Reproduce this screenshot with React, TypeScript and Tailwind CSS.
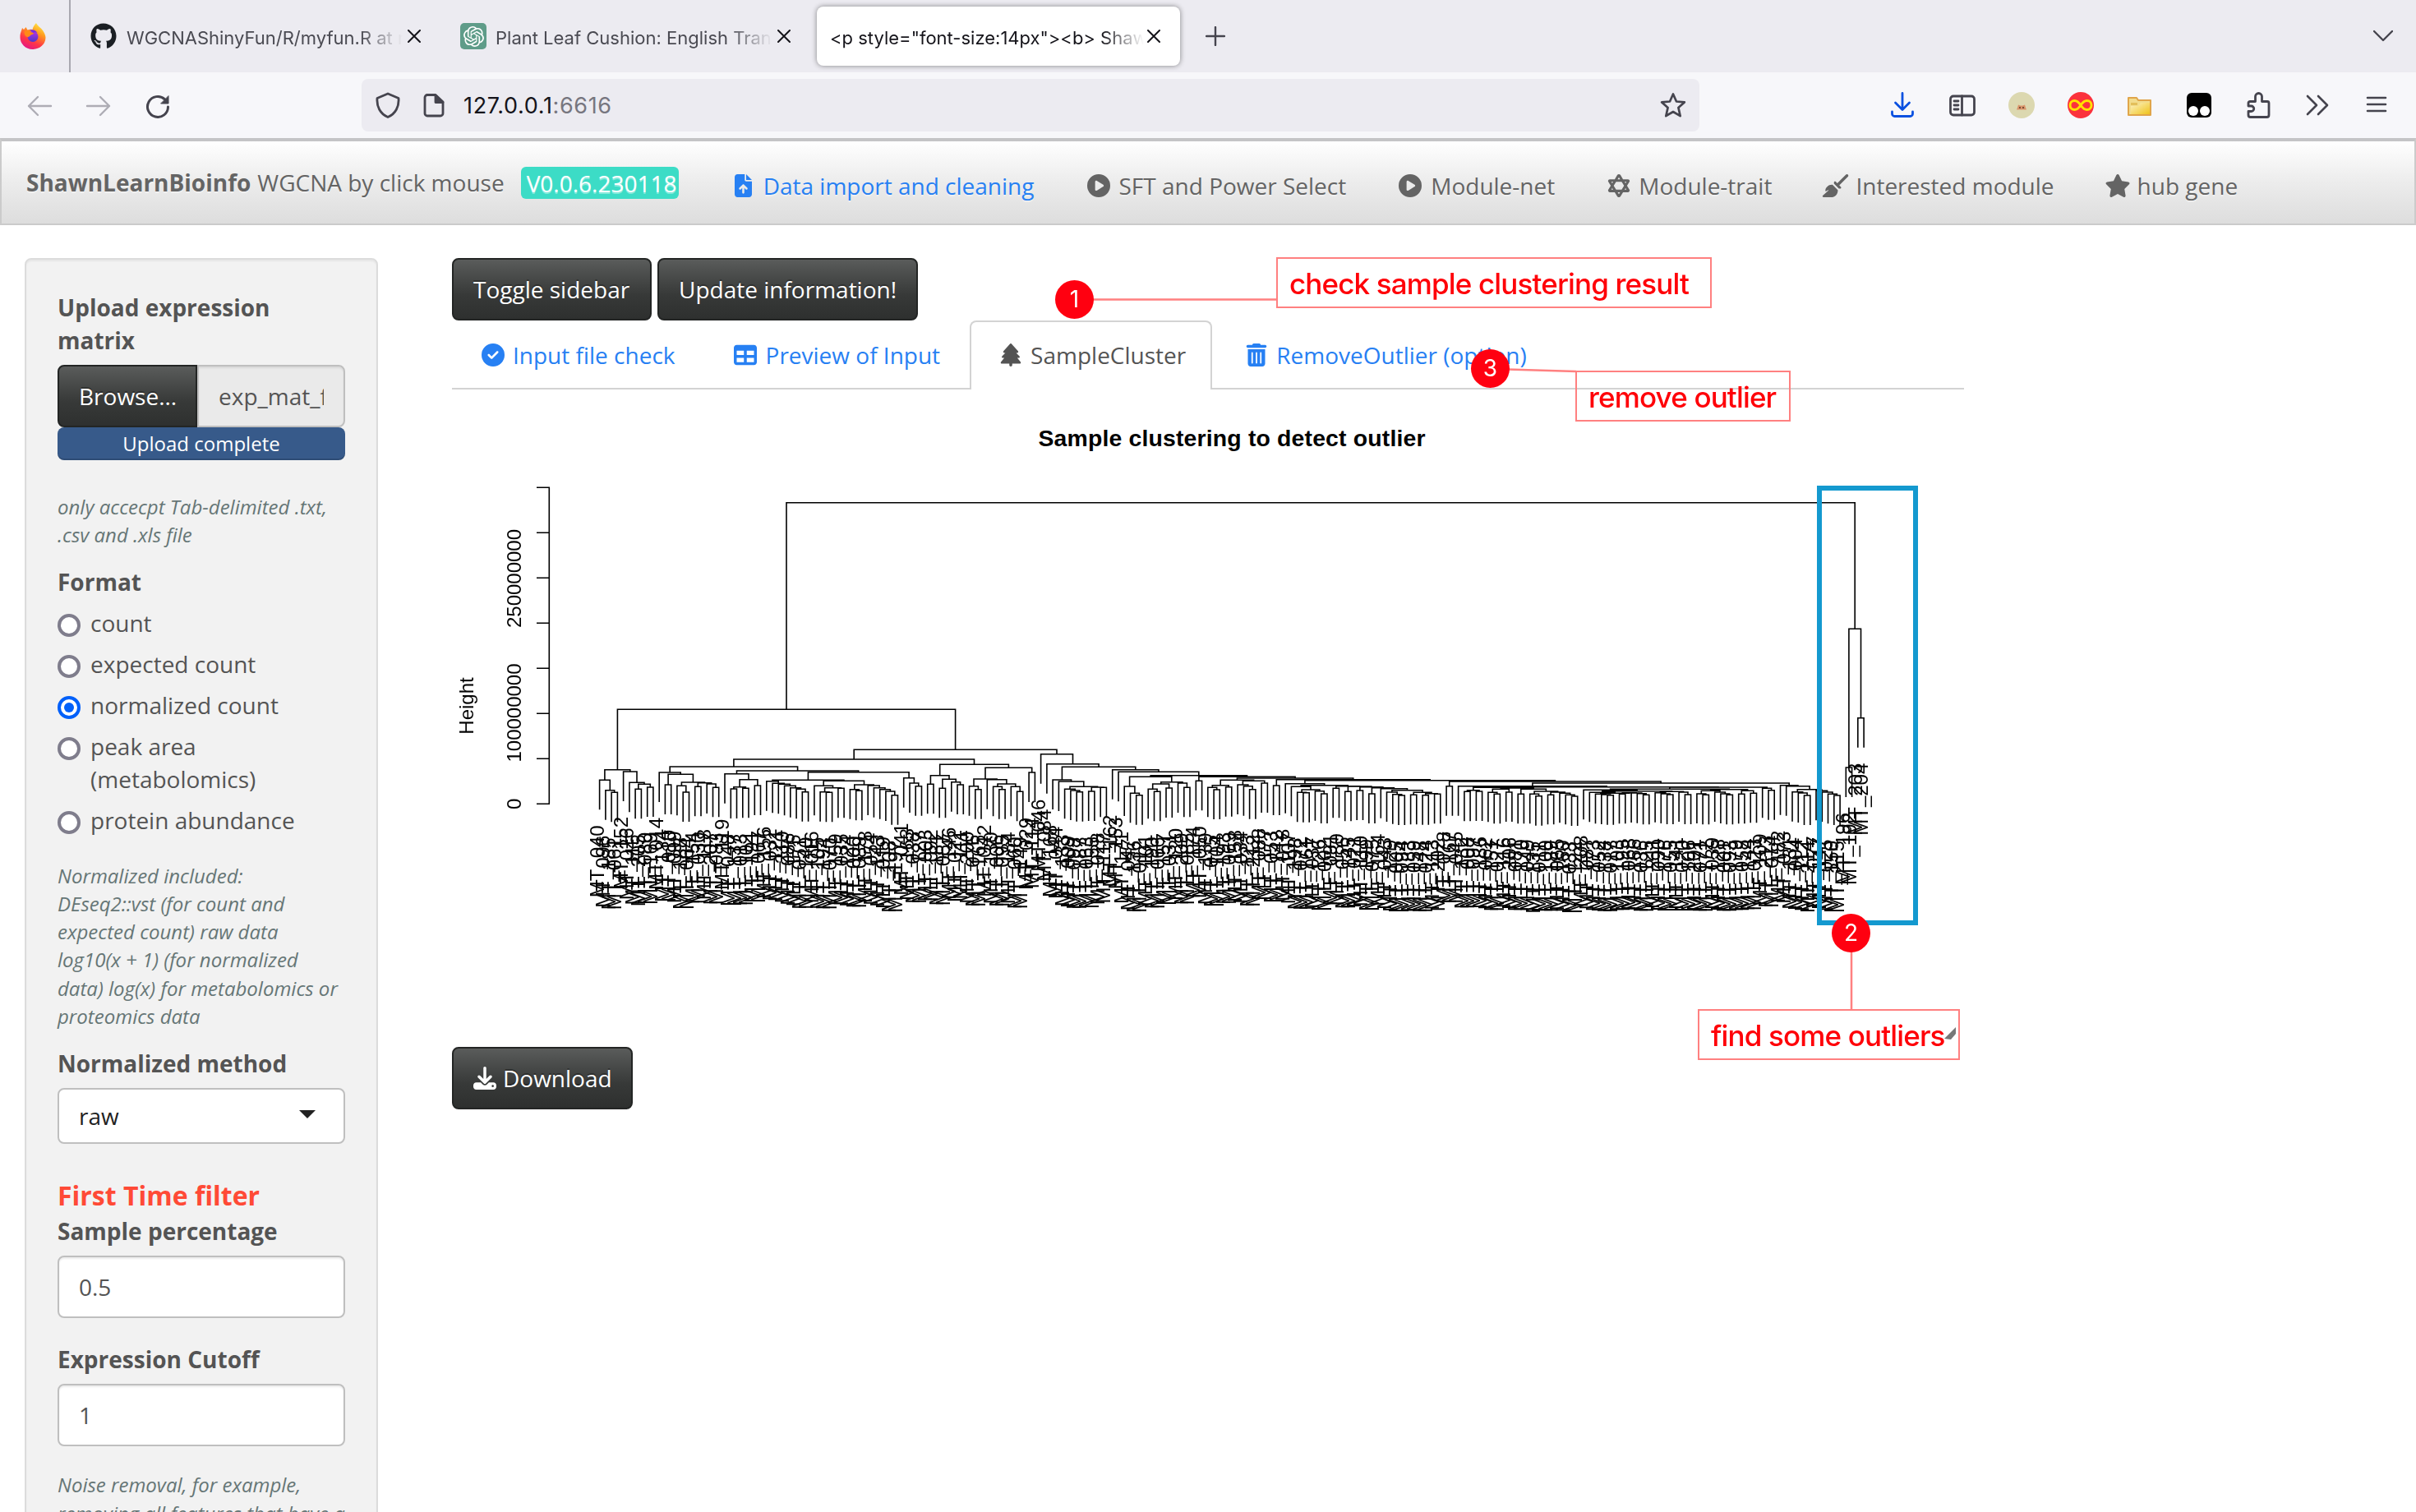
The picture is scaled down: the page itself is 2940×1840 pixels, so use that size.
import React from "react";
import {
  FaFileArrowUp,
  FaCirclePlay,
  FaStarOfDavid,
  FaBroom,
  FaStar,
  FaCircleCheck,
  FaTable,
  FaTree,
  FaTrashCan,
  FaDownload,
  FaGithub,
} from "react-icons/fa6";
import { SiOpenai } from "react-icons/si";

/* ---------- dendrogram data ---------- */

// A leaf is 0; a merge is [height, left, right].
type Node = 0 | [number, Node, Node];

const p = (h: number): Node => [h, 0, 0];

const groupA: Node = [290,
  [328, 0, [365, 0, p(373)]],
  [297, 0, [337, 0, [343, p(361), p(354)]]]];

const groupB: Node = [279,
  [300, 0, [307, p(345), [336, [349, 0, p(372)], [338, p(352), [342, 0, p(355)]]]]],
  [294,
    [305, 0, [326, [353, p(360), p(358)], p(348)]],
    [299,
      [328,
        [332, 0, [340, 0, [343, 0, [349, 0, [356, 0, [361, 0, p(371)]]]]]],
        [331,
          [349, 0, [356, [371, 0, p(373)], p(358)]],
          [345, [362, 0, p(367)], [348, 0, [356, 0, [362, 0, [369, 0, p(383)]]]]]]],
      [320, 0, [339, 0, p(350)]]]]];

const groupC: Node = [271,
  [311, p(343), [325, p(358), [335, 0, p(345)]]],
  [283,
    [324, [350, 0, p(362)], [326, 0, [342, [352, 0, p(362)], [352, 0, p(370)]]]],
    p(300)]];

const groupD: Node = [327, 0, [333, 0, [352,
  [361, 0, [366, 0, p(371)]],
  [354, p(369), p(355)]]]];

const groupE: Node = [316,
  [351, 0, [376, 0, p(383)]],
  [335, [342, [361, 0, p(370)], p(357)], [339, 0, p(355)]]];

const groupF: Node = [328,
  [347, [355, 0, p(363)], p(353)],
  [331, [345, 0, [350, 0, p(362)]], p(339)]];

const groupG: Node = [341, 0, [347,
  [352, 0, [363, [373, 0, p(374)], [368, 0, p(378)]]],
  [350, p(358), [351, p(370), [353, p(366), [356, p(378),
    [359, 0, [365, [372, 0, [380, 0, p(384)]], [373, p(382), [377, p(383), p(379)]]]]]]]]]];

const groupH: Node = [355,
  [365, p(370), p(369)],
  [357,
    [361, [373, 0, p(379)], p(372)],
    [361, p(379), [369, [379, 0, p(386)], [372, p(382), [376, 0, [382, 0, p(387)]]]]]]];

const groupI: Node = [361,
  [364, 0, [368,
    [373, 0, [376,
      [379, 0, [381, 0, p(383)]],
      [374, p(379), [375, 0, [377, 0, p(382)]]]]],
    [370, [374, 0, [378, 0, p(381)]], [372, 0, p(381)]]]],
  [362,
    [367, [378, 0, p(382)], [372, 0, [378, 0, p(382)]]],
    [367, p(379), p(376)]]];

const groupJ: Node = [347, 0, [350, 0, [362,
  [371, 0, [375, 0, p(384)]],
  [367, 0, [372, 0, [379, 0, p(384)]]]]]];

const lower: Node = [333,
  p(350),
  [339,
    [350, 0, [353, groupH, [354, groupI, [358, 0, p(365)]]]],
    groupJ]];

const middle: Node = [290, 0, [298, 0, [311,
  groupE,
  [316, p(331), [321, groupF, [326, p(348), [329, groupG, lower]]]]]]];

const tree: Node = [-685,
  [70, groupA, [217, [252, groupB, groupC], [233, 0, [269, 0, [280, groupD, middle]]]]],
  [-224, p(282), p(101)]];

const STEP = 7.257;
const X0 = 729.6;
const HANG = 36;
const toY = (h: number) => 840 + h / 3;

const leaves: { x: number; y: number }[] = [];
const segments: string[] = [];

function place(node: Node, parentY: number): { x: number; y: number } {
  if (node === 0) {
    const leaf = { x: X0 + leaves.length * STEP, y: parentY + HANG };
    leaves.push(leaf);
    return leaf;
  }
  const y = toY(node[0]);
  const l = place(node[1], y);
  const r = place(node[2], y);
  segments.push(`M${l.x.toFixed(1)} ${l.y.toFixed(1)}V${y.toFixed(1)}H${r.x.toFixed(1)}V${r.y.toFixed(1)}`);
  return { x: (l.x + r.x) / 2, y };
}
place(tree, 0);

const named: Record<number, string> = {
  0: "040", 4: "152", 10: "014", 21: "119", 51: "041", 72: "029", 74: "046", 75: "084",
  86: "162", 87: "153", 209: "196", 210: "192", 211: "203", 212: "204",
};
const taken = new Set(Object.values(named));
const labels = leaves.map((_, i) => {
  if (named[i]) return "MT_" + named[i];
  let n = (i * 89 + 7) % 213;
  let s = String(n).padStart(3, "0");
  while (taken.has(s)) {
    n = (n + 1) % 222;
    s = String(n).padStart(3, "0");
  }
  taken.add(s);
  return "MT_" + s;
});

const ticks = [593.3, 648.3, 703.3, 758.3, 813.3, 868.3, 923.3, 978.3];

function ClusterPlot() {
  return (
    <svg
      className="block h-[790px] w-[1840px]"
      viewBox="550 474 1840 790"
      fontFamily='"Liberation Sans", Arial, sans-serif'
      fontSize="24"
      fill="#000"
    >
      <text x="1499" y="542.5" textAnchor="middle" fontWeight="700" fontSize="28.4" textLength="471">
        Sample clustering to detect outlier
      </text>
      <g stroke="#000" strokeWidth="1.6" fill="none">
        <path d={"M668.3 593.3V978.3" + ticks.map((t) => `M669 ${t}H653`).join("")} />
        <path d={segments.join("")} />
      </g>
      <g opacity="0.99">
        <g textAnchor="middle">
          <text transform="translate(576 859) rotate(-90)">Height</text>
          <text transform="translate(633.5 978.3) rotate(-90)">0</text>
          <text transform="translate(633.5 867.5) rotate(-90)">100000000</text>
          <text transform="translate(633.5 704) rotate(-90)">250000000</text>
        </g>
        <g textAnchor="end">
          {leaves.map((l, i) => (
            <text key={i} transform={`translate(${(l.x + 5).toFixed(1)} ${(l.y + 19).toFixed(1)}) rotate(-90)`}>
              {labels[i]}
            </text>
          ))}
        </g>
      </g>
    </svg>
  );
}

/* ---------- browser chrome ---------- */

function Close() {
  return (
    <svg className="size-4 shrink-0" viewBox="0 0 16 16" stroke="#15141a" strokeWidth="2" strokeLinecap="round">
      <path d="M1 1l14 14M15 1L1 15" />
    </svg>
  );
}

function FadeText({ children, className }: { children: React.ReactNode; className: string }) {
  return (
    <span
      className={
        "mt-[3px] overflow-hidden whitespace-nowrap text-[22px] leading-8 [mask-image:linear-gradient(to_right,#000_calc(100%_-_52px),transparent)] " +
        className
      }
    >
      {children}
    </span>
  );
}

function Firefox() {
  return (
    <svg className="size-8" viewBox="0 0 32 32">
      <defs>
        <linearGradient id="fx" x1="0.8" y1="0" x2="0.3" y2="1">
          <stop offset="0" stopColor="#fff04a" />
          <stop offset="0.35" stopColor="#ff9a1f" />
          <stop offset="0.7" stopColor="#ff3647" />
          <stop offset="1" stopColor="#e31587" />
        </linearGradient>
        <linearGradient id="fxg" x1="0.5" y1="0" x2="0.5" y2="1">
          <stop offset="0" stopColor="#b833e1" />
          <stop offset="1" stopColor="#4a37c9" />
        </linearGradient>
      </defs>
      <path
        d="M20 0c1 3 5 5 8 9 2 3 3.500 6 3.500 9A15.500 14.500 0 0 1 .5 17c0-5 1.500-7 2.500-11l2 2 2.500-3 2 3.500c2-.8 4-.8 6-.5C16 5 18 2 20 0z"
        fill="url(#fx)"
      />
      <circle cx="16" cy="16.500" r="6.500" fill="url(#fxg)" />
      <path d="M6 10c3-1.500 6-.5 8 1.500 1.500 0 3 .5 3 1.200-1 1.500-3 1.300-4 2.300-1 1-2 3-5 1.500C6 15 5 12 6 10z" fill="#ff8a16" />
      <path d="M12 8.500c4-1 8 0 9.500 3.500-2-1-4-1-5 0z" fill="#7a2be0" />
    </svg>
  );
}

function TabStrip() {
  return (
    <div className="flex h-[88px] items-center bg-[#ecebf1] font-[Inter,sans-serif]">
      <div className="flex h-full w-[86px] items-center border-r-2 border-[#a9a8b0] pl-6">
        <Firefox />
      </div>
      <div className="flex w-[450px] items-center pl-6 text-[#4a4a52]">
        <FaGithub className="mr-3 size-8 shrink-0 text-[#1b1f24]" />
        <FadeText className="w-[336px]">WGCNAShinyFun/R/myfun.R at master</FadeText>
        <span className="ml-[6px]"><Close /></span>
      </div>
      <div className="flex w-[458px] items-center pl-6 text-[#4a4a52]">
        <span className="mr-[11px] flex size-8 shrink-0 items-center justify-center rounded-[5px] bg-[#5f9c89]">
          <SiOpenai className="size-[25px] text-white" />
        </span>
        <FadeText className="w-[337px]">Plant Leaf Cushion: English Translation</FadeText>
        <span className="ml-[6px]"><Close /></span>
      </div>
      <div className="flex h-[72px] w-[442px] items-center rounded-lg bg-white pl-4 text-[#15141a] shadow-[0_0_6px_rgba(0,0,0,0.45)]">
        <FadeText className="w-[382px]">{'<p style="font-size:14px"><b> ShawnLearn'}</FadeText>
        <span className="ml-[4px]"><Close /></span>
      </div>
      <svg className="ml-[31px] size-6" viewBox="0 0 24 24" stroke="#45444e" strokeWidth="2.400" strokeLinecap="round">
        <path d="M12 1v22M1 12h22" />
      </svg>
      <svg className="mr-[28px] ml-auto size-6" viewBox="0 0 24 24" fill="none" stroke="#45444e" strokeWidth="2.400" strokeLinecap="round" strokeLinejoin="round">
        <path d="M1 6l11 11L23 6" />
      </svg>
    </div>
  );
}

const line = { fill: "none", strokeLinecap: "round", strokeLinejoin: "round" } as const;

function AddressBar() {
  return (
    <div className="flex h-20 items-center bg-[#f7f7fa] pl-8 font-[Inter,sans-serif]">
      <svg className="size-8" viewBox="0 0 32 32" stroke="#aeadb5" strokeWidth="2.400" {...line}>
        <path d="M30 17H3M14 6L3 17l11 11" />
      </svg>
      <svg className="ml-10 size-8" viewBox="0 0 32 32" stroke="#aeadb5" strokeWidth="2.400" {...line}>
        <path d="M2 17h27M18 6l11 11-11 11" />
      </svg>
      <svg className="ml-10 size-8" viewBox="0 0 32 32" stroke="#45444e" strokeWidth="3" {...line}>
        <path d="M28.500 18a12.500 12.500 0 1 1-4-9.200" />
        <path d="M29 5v9h-9z" fill="#45444e" strokeWidth="1" />
      </svg>
      <div className="ml-[232px] flex h-16 w-[1628px] items-center rounded-lg bg-[#ecebf1] pr-4 pl-4">
        <svg className="size-8" viewBox="0 0 32 32" stroke="#45444e" strokeWidth="2.800" {...line}>
          <path d="M16 2l13 5.500c.8 10-3.500 19-13 23C6.500 26.500 2.200 17.500 3 7.500z" />
        </svg>
        <svg className="ml-6 size-8" viewBox="0 0 32 32" stroke="#45444e" strokeWidth="2.800" {...line}>
          <path d="M8 3.500h10l9 8.500v14a3 3 0 0 1-3 3H8a3 3 0 0 1-3-3v-19.500a3 3 0 0 1 3-3z" />
          <path d="M18 4v8.500h9z" fill="#45444e" />
        </svg>
        <span className="mt-[2px] ml-[20px] text-[27px] leading-9 tracking-[0.65px] text-[#15141a]">
          127.0.0.1<span className="text-[#77767f]">:6616</span>
        </span>
        <svg className="ml-auto size-8" viewBox="0 0 32 32" stroke="#45444e" strokeWidth="2.700" {...line}>
          <path d="M16 2.500l4 9 9.800.9-7.400 6.500 2.300 10.300L16 24l-8.700 5.200 2.300-10.300L2.200 12.400l9.800-.9z" />
        </svg>
      </div>
      <div className="ml-auto flex items-center gap-10 pr-8">
        <svg className="size-8" viewBox="0 0 32 32" stroke="#0a50e0" strokeWidth="2.800" {...line}>
          <path d="M15 1.500v20M6.500 13l8.500 8.500 8.500-8.500M2.500 24v2.500a3 3 0 0 0 3 3h19a3 3 0 0 0 3-3V24" />
        </svg>
        <svg className="size-8" viewBox="0 0 32 32" stroke="#45444e" strokeWidth="2.800" {...line}>
          <rect x="1.500" y="5" width="29" height="23" rx="3.500" />
          <path d="M15.500 5v23M6 11h5M6 16h5M6 21h5" />
        </svg>
        <svg className="size-8" viewBox="0 0 32 32">
          <circle cx="16" cy="16" r="16" fill="#dcd8b0" />
          <path d="M10 21.500l1-2.500 1-3.500 2.500 1h3l2.500-1 1 3.500 1 2.500z" fill="#d9936a" />
          <circle cx="14" cy="19" r="1" fill="#5b3a2a" />
          <circle cx="18" cy="19" r="1" fill="#5b3a2a" />
        </svg>
        <svg className="size-8" viewBox="0 0 32 32">
          <circle cx="16" cy="16" r="16" fill="#fb323c" />
          <path
            d="M16 16c-3-4.500-5-5.500-7.500-5.500a5.500 5.500 0 0 0 0 11c2.500 0 4.500-1 7.500-5.500s5-5.500 7.500-5.500a5.500 5.500 0 0 1 0 11c-2.500 0-4.500-1-7.500-5.500z"
            fill="none" stroke="#ffe100" strokeWidth="3"
          />
        </svg>
        <svg className="size-8" viewBox="0 0 32 32">
          <defs>
            <linearGradient id="fold" x1="0" y1="0" x2="1" y2="1">
              <stop offset="0" stopColor="#fdf3c4" />
              <stop offset="1" stopColor="#efc31b" />
            </linearGradient>
          </defs>
          <path d="M2 7h10l2 3h15v18H2z" fill="#f2dc8c" stroke="#e0a54a" strokeWidth="2" strokeLinejoin="round" />
          <path d="M5 17h9l3-4h11v14H5z" fill="url(#fold)" />
          <path d="M5 13h8v3H5z" fill="#e3bf5b" />
        </svg>
        <svg className="size-8" viewBox="0 0 32 32">
          <rect x="1" y="1" width="30" height="30" rx="6" fill="#000" />
          <circle cx="9" cy="23" r="6" fill="#fff" />
          <circle cx="23" cy="23" r="6" fill="#fff" />
        </svg>
        <svg className="size-8" viewBox="0 0 32 32" stroke="#45444e" strokeWidth="2.800" {...line}>
          <path d="M4 13.500a2 2 0 0 1 2-2h6.500V5.500a4 4 0 0 1 8 0v6H27a2 2 0 0 1 2 2V28a2.500 2.500 0 0 1-2.500 2.500h-20A2.500 2.500 0 0 1 4 28v-4.500h3.500a3 3 0 0 0 0-6.500H4z" />
        </svg>
        <svg className="size-8" viewBox="0 0 32 32" stroke="#45444e" strokeWidth="2.600" {...line}>
          <path d="M4 5l11 11L4 27M17 5l11 11-11 11" />
        </svg>
        <svg className="size-8" viewBox="0 0 32 32" stroke="#45444e" strokeWidth="2.600" {...line}>
          <path d="M5 7h22M5 15h22M5 23h22" />
        </svg>
      </div>
    </div>
  );
}

/* ---------- app ---------- */

const navItems = [
  { icon: FaCirclePlay, text: "SFT and Power Select", box: "w-[28px] mr-[11px] ml-[64px]" },
  { icon: FaCirclePlay, text: "Module-net", box: "w-[28px] mr-[11px] ml-[64px]" },
  { icon: FaStarOfDavid, text: "Module-trait", box: "w-[28px] mr-[10px] ml-[64px]" },
  { icon: FaBroom, text: "Interested module", box: "w-[35px] mr-[7px] ml-[60px]" },
  { icon: FaStar, text: "hub gene", box: "w-[32px] mr-[8px] ml-[61px]" },
];

function Navbar() {
  return (
    <div className="flex h-[106px] items-start border-2 border-t-4 border-[#cbcbcb] border-t-[#c4c4c6] bg-linear-to-b from-white via-[#ececec] to-[#dddddd] pl-[30px] text-[28px] leading-[40px] whitespace-nowrap text-[#646464] [text-shadow:0_2px_0_rgba(255,255,255,0.4)]">
      <div className="mt-[30px] flex items-center">
        <b>ShawnLearnBioinfo</b>
        <span className="ml-2">WGCNA by click mouse</span>
        <span className="ml-[20px] h-[39px] w-[192px] rounded-md bg-[#3cdcc6] pl-[7px] leading-[40px] text-white">
          V0.0.6.230118
        </span>
      </div>
      <div className="mt-[34px] ml-[68px] flex items-center">
        <FaFileArrowUp className="mr-[14px] h-[28px] w-[21px] text-[#2780f3]" />
        <span className="text-[#2780f3]">Data import and cleaning</span>
        {navItems.map(({ icon: Icon, text, box }) => (
          <React.Fragment key={text}>
            <Icon className={"h-[28px] " + box} />
            <span>{text}</span>
          </React.Fragment>
        ))}
      </div>
    </div>
  );
}

const darkButton =
  "flex items-center rounded-lg border-2 border-[#232524] bg-linear-to-b from-[#5a5c5b] via-[#373938] via-60% to-[#2e302f] h-[76px] px-6 text-white [text-shadow:0_-2px_0_rgba(0,0,0,0.3)] whitespace-nowrap";

function Radio({ text, checked }: { text: React.ReactNode; checked?: boolean }) {
  return (
    <div className="mt-[10px] flex items-start">
      <span
        className={
          "mt-[9px] mr-3 flex size-7 shrink-0 items-center justify-center rounded-full border-4 bg-white " +
          (checked ? "border-[#0060fa]" : "border-[#7f7d8c]")
        }
      >
        {checked && <span className="size-3 rounded-full bg-[#0060fa]" />}
      </span>
      <span>{text}</span>
    </div>
  );
}

const help = "text-[24px] leading-[34.28px] italic text-[#667676] whitespace-nowrap";
const field =
  "mt-[10px] flex h-[76px] items-center rounded-lg border-2 border-[#bfbfbf] bg-white pl-6 shadow-[inset_0_2px_2px_rgba(0,0,0,0.075)]";

function Sidebar() {
  return (
    <div className="ml-[30px] h-[1700px] w-[430px] shrink-0 rounded-lg border-2 border-[#dcdcdc] bg-[#f2f2f2] p-[38px] text-[28px] leading-[40px] text-[#545454] shadow-[inset_0_2px_2px_rgba(0,0,0,0.05)]">
      <b className="block">Upload expression<br />matrix</b>
      <div className="mt-[10px] flex">
        <div className={darkButton + " w-[170px] shrink-0 rounded-r-none"}>Browse...</div>
        <div className="flex h-[76px] w-[180px] items-center rounded-r-lg border-2 border-[#bfbfbf] bg-[#eaeaea] px-6 shadow-[inset_0_2px_2px_rgba(0,0,0,0.075)]">
          <span className="overflow-hidden whitespace-nowrap">exp_mat_fpkm.txt</span>
        </div>
      </div>
      <div className="h-10 rounded-lg bg-[#375a8a] text-center text-[24px] leading-[40px] text-white shadow-[inset_0_-2px_0_rgba(0,0,0,0.15)]">
        Upload complete
      </div>
      <p className={help + " mt-10"}>only accecpt Tab-delimited .txt,<br />.csv and .xls file</p>
      <b className="mt-[19px] block">Format</b>
      <Radio text="count" />
      <Radio text="expected count" />
      <Radio text="normalized count" checked />
      <Radio text={<>peak area<br />(metabolomics)</>} />
      <Radio text="protein abundance" />
      <p className={help + " mt-[31px]"}>
        Normalized included:<br />DEseq2::vst (for count and<br />expected count) raw data<br />
        log10(x + 1) (for normalized<br />data) log(x) for metabolomics or<br />proteomics data
      </p>
      <b className="mt-[20px] block">Normalized method</b>
      <div className="mt-[10px] flex h-[68px] items-center justify-between rounded-lg border-2 border-[#bfbfbf] bg-white pr-[34px] pl-6 text-[#222]">
        <span>raw</span>
        <span className="mb-1 border-x-10 border-t-10 border-x-transparent border-t-[#222]" />
      </div>
      <b className="mt-[45px] block text-[32px] leading-[36px] text-[#ff4a36]">First Time filter</b>
      <b className="mt-[5px] block">Sample percentage</b>
      <div className={field}>0.5</div>
      <b className="mt-[30px] block">Expression Cutoff</b>
      <div className={field}>1</div>
      <p className={help + " mt-[30px]"}>Noise removal, for example,<br />removing all features that have a</p>
    </div>
  );
}

const tabs = [
  { icon: FaCircleCheck, text: "Input file check" },
  { icon: FaTable, text: "Preview of Input" },
  { icon: FaTree, text: "SampleCluster", active: true },
  { icon: FaTrashCan, text: "RemoveOutlier (option)" },
];

function Main() {
  return (
    <div className="ml-[90px] w-[1840px] text-[28px] leading-[40px]">
      <div className="flex gap-[7px]">
        <div className={darkButton + " w-[243px]"}>Toggle sidebar</div>
        <div className={darkButton + " w-[317px]"}>Update information!</div>
      </div>
      <div className="flex h-[84px] gap-1 border-b-2 border-[#d3d3d3]">
        {tabs.map(({ icon: Icon, text, active }) => (
          <div
            key={text}
            className={
              "flex h-[84px] items-start rounded-t-lg border-2 border-b-0 px-[30px] pt-5 whitespace-nowrap " +
              (active ? "border-[#d3d3d3] bg-white text-[#545454]" : "border-transparent text-[#2780f3]")
            }
          >
            <span className="mt-[6px] mr-[7px] flex w-[35px] justify-center">
              <Icon className="size-[28px]" />
            </span>
            {text}
          </div>
        ))}
      </div>
      <ClusterPlot />
      <div className="mt-[10px] flex">
        <div className={darkButton + " w-[220px]"}>
          <FaDownload className="mr-2 size-[28px] shrink-0" />
          Download
        </div>
      </div>
    </div>
  );
}

/* Numbered call-outs drawn over the page */
function Marker({ n, pos }: { n: number; pos: string }) {
  return (
    <span
      className={
        "absolute flex size-[47px] items-center justify-center rounded-full bg-[#ff0010] pb-[2px] text-[28px] leading-none text-white " + pos
      }
    >
      {n}
    </span>
  );
}

function Note({ text, pos }: { text: string; pos: string }) {
  return (
    <span
      className={
        "absolute flex h-[62px] items-center border-2 border-[#ff8080] pt-[2px] pl-[14px] text-[35px] font-medium leading-none tracking-[-0.85px] whitespace-nowrap text-[#ff0008] " + pos
      }
    >
      {text}
    </span>
  );
}

function Annotations() {
  return (
    <div className="pointer-events-none absolute inset-0 font-[Inter,sans-serif]">
      <span className="absolute top-[591px] left-[2211px] h-[535px] w-[123px] border-[6px] border-[#1499cf]" />
      <svg className="absolute inset-0 h-full w-full" viewBox="0 0 2940 1840" fill="none" stroke="#ff8080" strokeWidth="2.500">
        <path d="M1325 364.500H1554M1835 449.500L1918 452M2253 1155V1229" />
        <path d="M2366 1264L2380 1250V1258L2374 1265z" fill="#777" stroke="none" />
      </svg>
      <Marker n={1} pos="left-[1284px] top-[341px]" />
      <Marker n={3} pos="left-[1790px] top-[425px]" />
      <Marker n={2} pos="left-[2229px] top-[1112px]" />
      <Note text="check sample clustering result" pos="left-[1553px] top-[313px] w-[530px]" />
      <Note text="remove outlier" pos="left-[1917px] top-[451px] w-[262px]" />
      <Note text="find some outliers" pos="left-[2066px] top-[1228px] w-[319px]" />
    </div>
  );
}

export default function App() {
  return (
    <div className="relative h-[1840px] w-[2940px] overflow-hidden bg-white font-['Open_Sans',sans-serif]">
      <TabStrip />
      <AddressBar />
      <Navbar />
      <div className="mt-10 flex items-start">
        <Sidebar />
        <Main />
      </div>
      <Annotations />
    </div>
  );
}
